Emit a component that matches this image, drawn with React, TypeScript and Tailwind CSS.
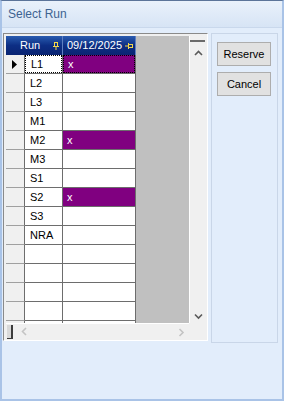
const rows = [
  { run: "L1", x: true, current: true },
  { run: "L2", x: false },
  { run: "L3", x: false },
  { run: "M1", x: false },
  { run: "M2", x: true },
  { run: "M3", x: false },
  { run: "S1", x: false },
  { run: "S2", x: true },
  { run: "S3", x: false },
  { run: "NRA", x: false },
  { run: "", x: false },
  { run: "", x: false },
  { run: "", x: false },
  { run: "", x: false },
  { run: "", x: false },
];

function PinVertical() {
  return (
    <svg width="6" height="8" viewBox="0 0 6 8" className="shrink-0">
      <rect x="1.5" y="0.5" width="3" height="4" fill="none" stroke="#f5d94a" strokeWidth="1" />
      <line x1="0" y1="4.5" x2="6" y2="4.5" stroke="#f5d94a" strokeWidth="1" />
      <line x1="3" y1="5" x2="3" y2="8" stroke="#f5d94a" strokeWidth="1" />
    </svg>
  );
}

function PinHorizontal() {
  return (
    <svg width="8" height="6" viewBox="0 0 8 6" className="shrink-0">
      <line x1="0" y1="3" x2="3" y2="3" stroke="#f5d94a" strokeWidth="1" />
      <line x1="3.5" y1="0" x2="3.5" y2="6" stroke="#f5d94a" strokeWidth="1" />
      <rect x="3.5" y="1.5" width="4" height="3" fill="none" stroke="#f5d94a" strokeWidth="1" />
    </svg>
  );
}

function Chevron({ dir, color }: { dir: "up" | "down" | "left" | "right"; color: string }) {
  const pts = {
    up: "1,5 4.5,1.5 8,5",
    down: "1,1.5 4.5,5 8,1.5",
    left: "5,1 1.5,4.5 5,8",
    right: "1.5,1 5,4.5 1.5,8",
  }[dir];
  const horiz = dir === "up" || dir === "down";
  return (
    <svg width={horiz ? 9 : 7} height={horiz ? 7 : 9} viewBox={horiz ? "0 0 9 7" : "0 0 7 9"}>
      <polyline points={pts} fill="none" stroke={color} strokeWidth="1.6" />
    </svg>
  );
}

function GridRow({ run, x, current }: { run: string; x: boolean; current?: boolean }) {
  return (
    <div className="flex h-[19px] shrink-0">
      <div className="w-[19px] border-r border-b border-r-[#6d6d6d] border-b-[#a0a0a0] bg-[#f0f0f0] flex items-center pl-[6px]">
        {current && (
          <svg width="5" height="9" viewBox="0 0 5 9">
            <polygon points="0,0 5,4.5 0,9" fill="#000" />
          </svg>
        )}
      </div>
      <div className="w-[38px] border-r border-b border-[#6d6d6d] bg-white relative">
        <div
          className={`absolute inset-0 flex items-center pl-[5px] text-[11px] text-black ${
            current ? "border border-dotted border-black" : ""
          }`}
        >
          {run}
        </div>
      </div>
      <div
        className={`w-[73px] border-r border-b border-[#6d6d6d] relative ${x ? "bg-[#800080]" : "bg-white"}`}
      >
        <div
          className={`absolute inset-0 flex items-center pl-[4px] text-[11px] text-white ${
            current ? "border border-dotted border-black" : ""
          }`}
        >
          {x ? "x" : ""}
        </div>
      </div>
    </div>
  );
}

export default function App() {
  return (
    <div className="w-[284px] h-[401px] flex flex-col bg-[#e2edfb] border-x-2 border-b-2 border-x-[#a9c3e7] border-b-[#a9c3e7] border-t border-t-[#5b7499] font-['Liberation_Sans',Arial,sans-serif] overflow-hidden">
      {/* title */}
      <div className="h-[27px] shrink-0 flex items-center pl-[6px] text-[12px] text-[#3d6391] bg-gradient-to-b from-[#e9f1fb] to-[#d7e4f5] border-b border-[#c9d8ec]">
        Select Run
      </div>

      <div className="flex pl-[1px] pt-[5px]">
        {/* grid */}
        <div className="w-[205px] h-[308px] border border-t-[#8a8a8a] border-l-[#8a8a8a] border-r-[#ffffff] border-b-[#ffffff] bg-[#f0f0f0] pt-[2px] pl-[2px] pr-[1px] pb-[1px] flex flex-col">
          <div className="flex h-[287px] shrink-0">
            <div className="flex flex-1 overflow-hidden">
              <div className="flex flex-col w-[130px] shrink-0 overflow-hidden">
                {/* header */}
                <div className="flex h-[19px] shrink-0 bg-gradient-to-b from-[#2b5cb0] via-[#0d2e84] to-[#0a2472] text-white text-[11px]">
                  <div className="w-[57px] flex items-center border-r border-[#5e7fc0]">
                    <span className="pl-[14px] w-[47px]">Run</span>
                    <PinVertical />
                  </div>
                  <div className="w-[73px] flex items-center border-r border-[#5e7fc0] pl-[4px] gap-[3px]">
                    <span>09/12/2025</span>
                    <PinHorizontal />
                  </div>
                </div>
                {rows.map((r, i) => (
                  <GridRow key={i} run={r.run} x={r.x} current={r.current} />
                ))}
              </div>
              <div className="flex-1 bg-[#c0c0c0]" />
            </div>
            {/* vertical scrollbar */}
            <div className="w-[17px] shrink-0 border-l border-white bg-[#f0f0f0] flex flex-col">
              <div className="h-[4px]" />
              <div className="h-[2px] bg-[#6b6b6b] mr-[1px]" />
              <div className="h-[8px]" />
              <div className="flex justify-center">
                <Chevron dir="up" color="#5a5a5a" />
              </div>
              <div className="flex-1" />
              <div className="flex justify-center pb-[3px]">
                <Chevron dir="down" color="#5a5a5a" />
              </div>
            </div>
          </div>
          {/* horizontal scrollbar */}
          <div className="flex flex-1">
            <div className="w-[183px] bg-[#f0f0f0] border-t border-white flex items-center">
              <div className="ml-[1px] w-[6px] h-[14px] bg-[#d9d9d9] border-r-2 border-b border-[#3c3c3c]" />
              <div className="ml-[8px]">
                <Chevron dir="left" color="#c4c4c4" />
              </div>
              <div className="flex-1" />
              <div className="mr-[4px] mt-[2px]">
                <Chevron dir="right" color="#c4c4c4" />
              </div>
            </div>
            <div className="flex-1 bg-[#f0f0f0]" />
          </div>
        </div>

        {/* buttons panel */}
        <div className="ml-[3px] w-[67px] h-[310px] border border-[#c9d6e8] pt-[8px] pl-[5px] flex flex-col gap-[6px]">
          <button className="w-[54px] h-[24px] bg-[#e1e1e1] border border-[#adadad] text-[11px] text-black">
            Reserve
          </button>
          <button className="w-[54px] h-[24px] bg-[#e1e1e1] border border-[#adadad] text-[11px] text-black">
            Cancel
          </button>
        </div>
      </div>
    </div>
  );
}
